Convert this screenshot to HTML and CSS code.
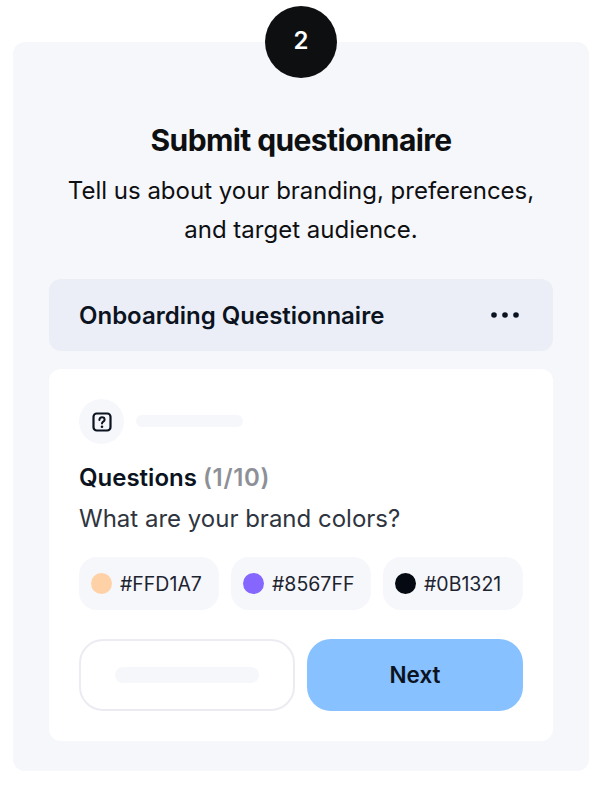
FILE: index.html
```html
<!DOCTYPE html>
<html lang="en">
<head>
<meta charset="utf-8">
<title>Submit questionnaire</title>
<link rel="stylesheet" href="styles.css">
</head>
<body>
<main class="panel">
  <div class="badge">2</div>
  <h1 class="title">Submit questionnaire</h1>
  <p class="lead">Tell us about your branding, preferences, and target audience.</p>
  <div class="doc-bar">
    <span class="doc-name">Onboarding Questionnaire</span>
    <svg class="dots" width="30" height="8" viewBox="0 0 30 8" aria-hidden="true"><circle cx="4" cy="4" r="2.8"/><circle cx="15" cy="4" r="2.8"/><circle cx="26" cy="4" r="2.8"/></svg>
  </div>
  <section class="card">
    <div class="card-head">
      <span class="icon-wrap">
        <svg width="20" height="20" viewBox="0 0 20 20" fill="none" aria-hidden="true">
          <rect x="1.5" y="1.5" width="17" height="17" rx="3.2" stroke="#0b1321" stroke-width="2.2"/>
          <path d="M7.4 8c0-1.6 1.1-2.7 2.6-2.7s2.6 1 2.6 2.4c0 2-2.6 1.9-2.6 3.8" stroke="#0b1321" stroke-width="2" stroke-linecap="round"/>
          <circle cx="10" cy="14.7" r="1.3" fill="#0b1321"/>
        </svg>
      </span>
      <span class="skeleton skeleton-head"></span>
    </div>
    <h2 class="q-title">Questions <span class="q-count">(1/10)</span></h2>
    <p class="q-text">What are your brand colors?</p>
    <div class="chips">
      <div class="chip"><span class="swatch swatch-peach"></span>#FFD1A7</div>
      <div class="chip"><span class="swatch swatch-purple"></span>#8567FF</div>
      <div class="chip"><span class="swatch swatch-ink"></span>#0B1321</div>
    </div>
    <div class="actions">
      <div class="btn btn-ghost"><span class="skeleton skeleton-btn"></span></div>
      <div class="btn btn-next">Next</div>
    </div>
  </section>
</main>
</body>
</html>
```

FILE: styles.css
```css
* { box-sizing: border-box; }
html, body { margin: 0; background: #fff; }
body { font-family: "Inter", sans-serif; color: #0b1321; padding: 42px 16px 24px 13px; }
.panel { position: relative; width: 576px; height: 729px; background: #f6f7fb; border-radius: 12px; padding: 78px 36px 30px; }
.badge { position: absolute; left: 252px; top: -36px; width: 72px; height: 72px; border-radius: 50%; background: #0e0f11; color: #fff; font-size: 24px; font-weight: 600; line-height: 70px; text-align: center; }
.title { margin: 0; font-size: 30px; line-height: 40px; font-weight: 700; text-align: center; color: #0e0f11; letter-spacing: -0.6px; }
.lead { margin: 11px auto 0; width: 490px; font-size: 24px; line-height: 39px; text-align: center; color: #0e0f11; }
.doc-bar { margin-top: 30px; height: 72px; background: #ebeef6; border-radius: 12px; padding: 0 33px 0 30px; display: flex; align-items: center; justify-content: space-between; }
.doc-name { font-size: 24px; font-weight: 600; }
.dots { fill: #0b1321; }
.card { margin-top: 18px; height: 372px; background: #fff; border-radius: 12px; padding: 30px; }
.card-head { display: flex; align-items: center; gap: 11px; }
.icon-wrap { width: 45px; height: 45px; border-radius: 50%; background: #f6f7fb; display: flex; align-items: center; justify-content: center; }
.skeleton { display: block; background: #f6f7fb; border-radius: 8px; }
.skeleton-head { width: 107px; height: 12px; margin-left: 1px; margin-top: -1px; }
.q-title { margin: 16px 0 0; font-size: 24px; line-height: 36px; font-weight: 600; }
.q-count { color: #8d9096; letter-spacing: 0.7px; }
.q-text { margin: 5px 0 0; font-size: 24px; line-height: 36px; color: #2f3540; }
.chips { display: flex; gap: 12px; margin-top: 20px; }
.chip { width: 140px; height: 53px; border-radius: 18px; background: #f6f7fb; display: flex; align-items: center; gap: 8px; padding-left: 12px; font-size: 19.5px; color: #1d2430; }
.swatch { width: 21px; height: 21px; border-radius: 50%; flex: none; }
.swatch-peach { background: #ffd1a7; }
.swatch-purple { background: #8567ff; }
.swatch-ink { background: #050a12; }
.actions { display: flex; gap: 12px; margin-top: 29px; }
.btn { width: 216px; height: 72px; border-radius: 24px; display: flex; align-items: center; justify-content: center; }
.btn-ghost { background: #fff; border: 2px solid #ecebf2; }
.skeleton-btn { width: 144px; height: 16px; }
.btn-next { background: #87c1ff; font-size: 22.5px; font-weight: 600; color: #0b1321; padding-bottom: 2px; }
```
